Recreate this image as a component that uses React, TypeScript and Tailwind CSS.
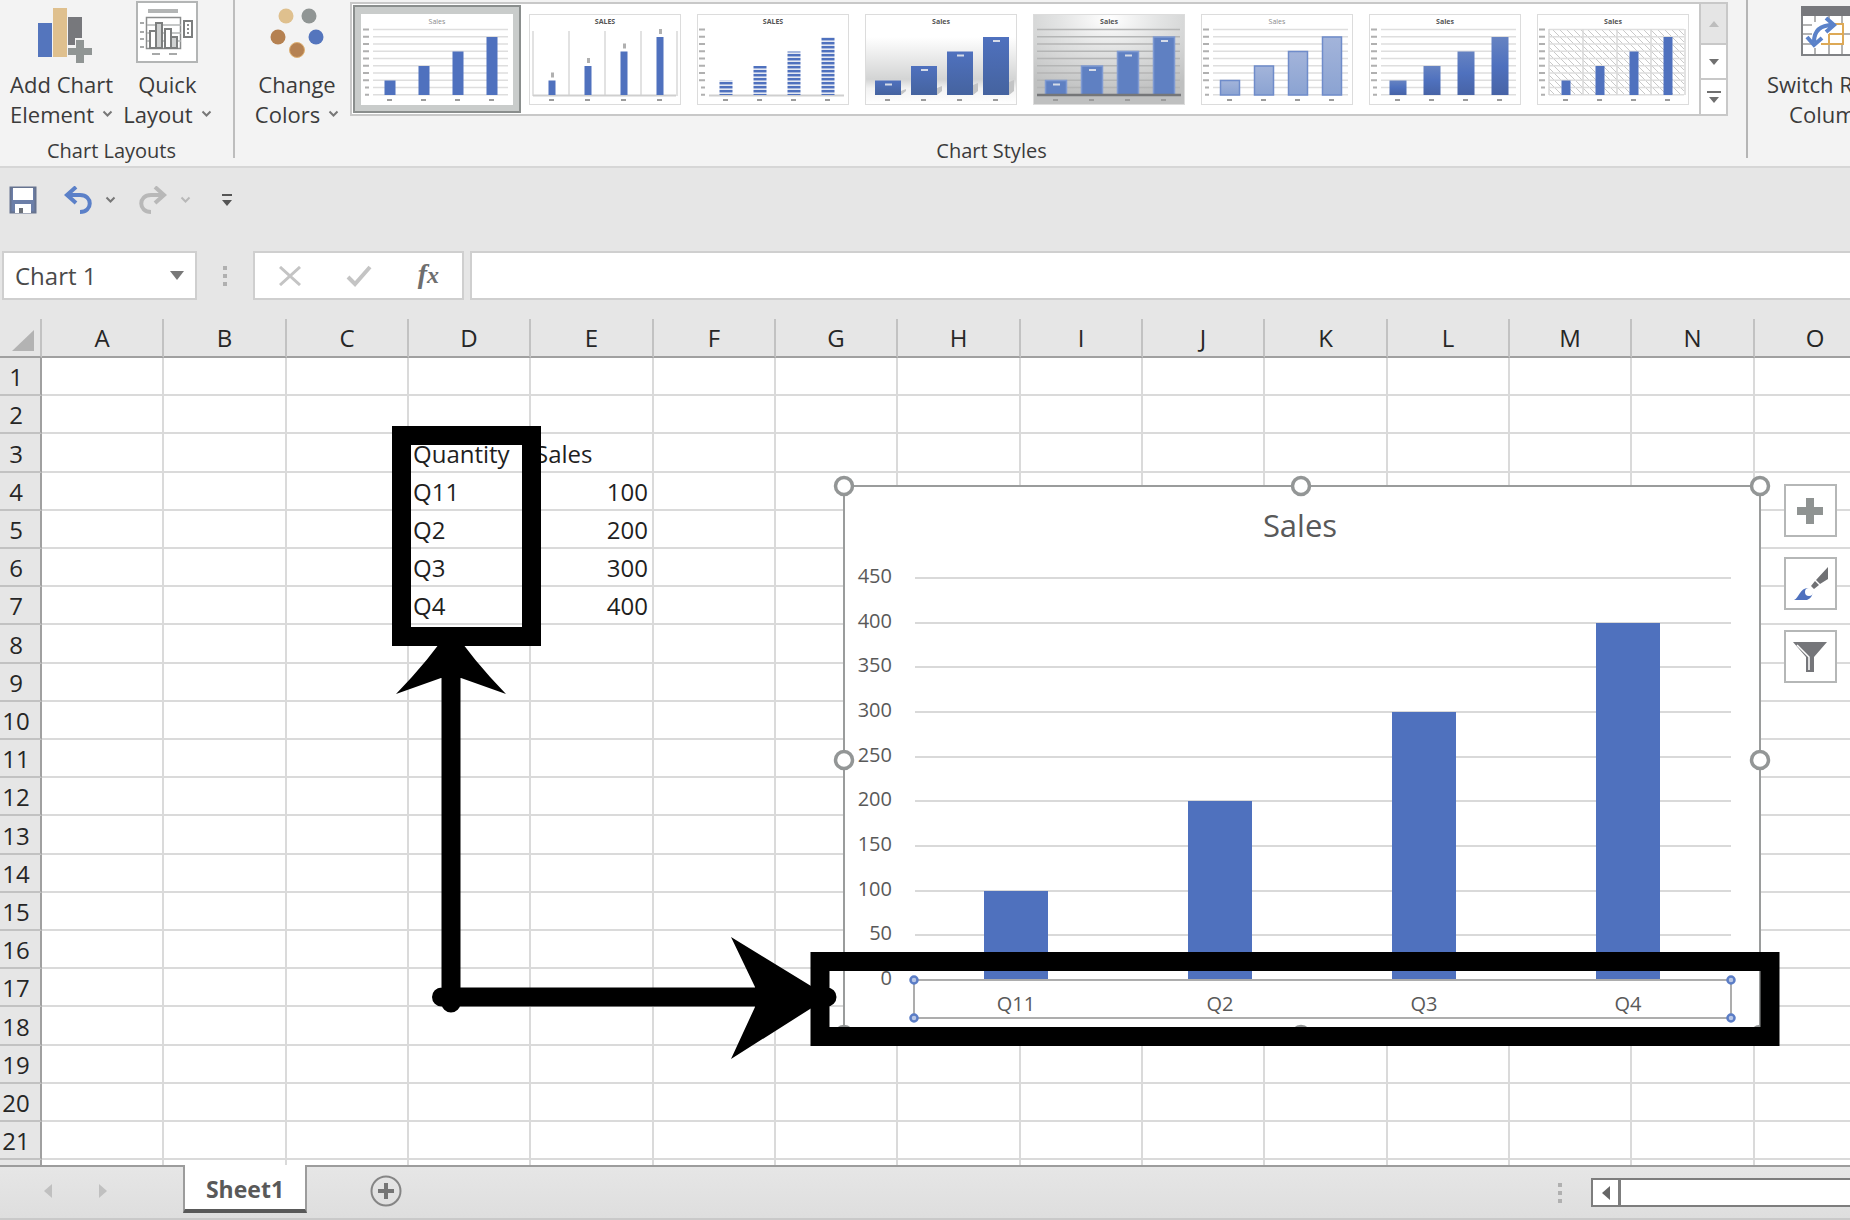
import React from 'react';
import { clsx } from 'clsx';

type ThumbKind = 'plain' | 'columns' | 'striped' | 'shadow' | 'gray' | 'light' | 'gradient' | 'hatch';

interface ThumbStyle {
  kind: ThumbKind;
  title: string;
  barWidth: number;
  bold: boolean;
}

const THUMBS: ThumbStyle[] = [
  { kind: 'plain', title: 'Sales', barWidth: 11, bold: false },
  { kind: 'columns', title: 'SALES', barWidth: 7, bold: true },
  { kind: 'striped', title: 'SALES', barWidth: 13, bold: true },
  { kind: 'shadow', title: 'Sales', barWidth: 26, bold: true },
  { kind: 'gray', title: 'Sales', barWidth: 21, bold: true },
  { kind: 'light', title: 'Sales', barWidth: 19, bold: false },
  { kind: 'gradient', title: 'Sales', barWidth: 17, bold: true },
  { kind: 'hatch', title: 'Sales', barWidth: 9, bold: true },
];

const THUMB_FILL: Record<ThumbKind, string> = {
  plain: '#4f71be',
  columns: '#4f71be',
  striped: 'url(#bar-stripes)',
  shadow: 'url(#bar-dark)',
  gray: '#5f80c2',
  light: 'url(#bar-light)',
  gradient: 'url(#bar-fade)',
  hatch: '#4f71be',
};

const COLUMNS = 'ABCDEFGHIJKLMNO'.split('');
const ROWS = Array.from({ length: 21 }, (_, i) => i + 1);

const CELLS: Record<string, string | number> = {
  D3: 'Quantity',
  E3: 'Sales',
  D4: 'Q11',
  E4: 100,
  D5: 'Q2',
  E5: 200,
  D6: 'Q3',
  E6: 300,
  D7: 'Q4',
  E7: 400,
};

const SERIES = [
  { label: 'Q11', value: 100 },
  { label: 'Q2', value: 200 },
  { label: 'Q3', value: 300 },
  { label: 'Q4', value: 400 },
];

const TICKS = [0, 50, 100, 150, 200, 250, 300, 350, 400, 450];

const Chevron = ({ className = 'text-[#777]' }: { className?: string }) => (
  <svg width="11" height="8" viewBox="0 0 11 8" className={clsx('shrink-0', className)} aria-hidden="true">
    <path d="M1.5 1.5 5.5 5.5 9.5 1.5" fill="none" stroke="currentColor" strokeWidth="2" />
  </svg>
);

const Dots = () => (
  <svg width="4" height="20" viewBox="0 0 4 20" aria-hidden="true">
    <path d="M0 0h4v4H0zM0 8h4v4H0zM0 16h4v4H0z" fill="#b0b0b0" />
  </svg>
);

const ThumbDefs = () => (
  <svg width="0" height="0" className="absolute" aria-hidden="true">
    <defs>
      <pattern id="bar-stripes" width="4" height="4" patternUnits="userSpaceOnUse">
        <rect width="4" height="4" fill="#e4e8f2" />
        <rect width="4" height="2.4" fill="#4f71be" />
      </pattern>
      <pattern id="bg-hatch" width="7" height="7" patternUnits="userSpaceOnUse">
        <path d="M0 0 7 7" stroke="#c9c9c9" strokeWidth="1" />
      </pattern>
      <linearGradient id="bar-dark" x2="0" y2="1">
        <stop offset="0" stopColor="#4f71be" />
        <stop offset="1" stopColor="#45639f" />
      </linearGradient>
      <linearGradient id="bar-light" x2="0" y2="1">
        <stop offset="0" stopColor="#a3b4da" />
        <stop offset="1" stopColor="#8ba3d2" />
      </linearGradient>
      <linearGradient id="bar-fade" x2="0" y2="1">
        <stop offset="0" stopColor="#6683c2" />
        <stop offset="0.5" stopColor="#4f71be" />
        <stop offset="1" stopColor="#4763a6" />
      </linearGradient>
      <linearGradient id="bg-floor" x2="0" y2="1">
        <stop offset="0.25" stopColor="#ffffff" />
        <stop offset="0.72" stopColor="#d3d4d4" />
        <stop offset="0.82" stopColor="#f2f2f2" />
        <stop offset="1" stopColor="#ffffff" />
      </linearGradient>
      <radialGradient id="bg-gray" cx="0.5" cy="0.05" r="0.85">
        <stop offset="0" stopColor="#ffffff" />
        <stop offset="0.4" stopColor="#e2e3e3" />
        <stop offset="1" stopColor="#bfc0c0" />
      </radialGradient>
    </defs>
  </svg>
);

const StyleThumb = ({ kind, title, barWidth, bold }: ThumbStyle) => {
  const wide = kind === 'columns' || kind === 'shadow' || kind === 'gray';
  const grid = kind === 'plain' || kind === 'gray' || kind === 'light' || kind === 'gradient' || kind === 'hatch';
  const ticks = kind !== 'columns' && kind !== 'shadow' && kind !== 'gray';
  const first = wide ? 23 : 29;
  const step = wide ? 36 : 34;
  const left = wide ? 4 : 12;
  const background = kind === 'shadow' ? 'url(#bg-floor)' : kind === 'gray' ? 'url(#bg-gray)' : '#fff';

  return (
    <svg width="152" height="91" viewBox="0 0 152 91" className="block" aria-hidden="true">
      <rect x="0.5" y="0.5" width="151" height="90" fill={background} stroke={kind === 'plain' ? '#fff' : '#dcdcdc'} />
      {kind === 'hatch' && <rect x="12" y="15" width="135" height="66" fill="url(#bg-hatch)" />}
      {grid &&
        Array.from({ length: 10 }, (_, i) => (
          <path key={i} d={`M${left} ${15.5 + i * 7.25}H147`} stroke={kind === 'gray' ? '#b4b5b5' : '#dedede'} strokeWidth="1.5" />
        ))}
      {(kind === 'columns' || kind === 'hatch') &&
        [0, 1, 2, 3, 4].map((i) => (
          <path
            key={i}
            d={kind === 'columns' ? `M${4 + i * 36} 17V82` : `M${12 + i * 34} 15V81`}
            stroke="#d9d9d9"
            strokeWidth="1.5"
          />
        ))}
      {!grid && kind !== 'shadow' && <path d={`M${left} 81.5H147`} stroke="#cfcfcf" strokeWidth="2" />}
      {ticks && Array.from({ length: 10 }, (_, i) => <rect key={i} x={i > 7 ? 4 : 2} y={14.5 + i * 7.25} width={i > 7 ? 4 : 6} height="2" fill="#b0b0b0" />)}
      {[0, 1, 2, 3].map((i) => {
        const center = first + i * step;
        const top = 66.5 - i * 14.5;
        return (
          <g key={i}>
            {kind === 'shadow' && <path d={`M${center + 13} 81V${77 - i * 3}L${center + 18} ${75 - i * 3}V77Z`} fill="#c3c4c5" />}
            <rect
              x={center - barWidth / 2}
              y={top}
              width={barWidth}
              height={81 - top}
              fill={THUMB_FILL[kind]}
              stroke={kind === 'light' ? '#6f8cca' : kind === 'gray' ? '#7f9ad2' : 'none'}
              strokeWidth="1.5"
            />
            {(kind === 'shadow' || kind === 'gray') && <rect x={center - 3} y={top + 3} width="7" height="2" fill="#d5dbe8" />}
            {kind === 'columns' && <rect x={center - 1} y={top - 8} width="3" height="5" fill="#b0b0b0" />}
            <rect x={center - 3} y="85" width="5" height="2" fill="#9c9c9c" />
          </g>
        );
      })}
      {kind === 'gray' && <path d="M4 81H148" stroke="#757678" strokeWidth="2.5" />}
      <text
        x="76"
        y="10"
        textAnchor="middle"
        className={clsx('text-[7px]', bold ? 'fill-[#555] font-bold' : 'fill-[#8a8a8a]')}
      >
        {title}
      </text>
    </svg>
  );
};

const AddElementIcon = () => (
  <svg width="56" height="58" viewBox="0 0 56 58" aria-hidden="true">
    <rect x="1" y="16" width="14" height="34" fill="#5475bd" />
    <rect x="16" y="1" width="14" height="49" fill="#dfc08e" />
    <path d="M31 10h14v21h-7v7h-7z" fill="#77787c" />
    <path d="M39 33h8v8h8v7h-8v8h-8v-8h-8v-7h8z" fill="#909594" />
  </svg>
);

const QuickLayoutIcon = () => (
  <svg width="62" height="62" viewBox="0 0 62 62" aria-hidden="true">
    <rect x="1" y="1" width="60" height="60" fill="#fff" stroke="#b3b5b5" strokeWidth="2" />
    <rect x="12" y="8" width="30" height="4" fill="#b3b5b5" />
    <g fill="none" stroke="#8b8d8d" strokeWidth="1.5">
      <rect x="10.500" y="16.500" width="34" height="31" />
      <path d="M11 24h34M11 32h34M11 40h34" stroke="#b3b5b5" />
      <path d="M4 22h4M4 31h4M4 38h4M4 46h4M16 53h8M33 53h8" />
    </g>
    <g fill="#fff" stroke="#7c7e7e" strokeWidth="2">
      <path d="M14 47V30h6v17zM29 47V28h6v19z" />
      <path d="M20 47V22h6v25zM35 47V36h6v11z" fill="#cfd1d1" />
      <rect x="48" y="20" width="8" height="16" />
    </g>
    <path d="M51 23h2v2h-2zM51 27h2v2h-2zM51 31h2v2h-2z" fill="#8b8d8d" />
  </svg>
);

const ColorsIcon = () => (
  <svg width="56" height="52" viewBox="0 0 56 52" aria-hidden="true">
    <circle cx="17" cy="9" r="7.500" fill="#dfc08e" />
    <circle cx="40" cy="9" r="7.500" fill="#909594" />
    <circle cx="9" cy="30" r="7.500" fill="#b58151" />
    <circle cx="47" cy="30" r="7.500" fill="#5475bd" />
    <circle cx="28" cy="43" r="7.500" fill="#b58151" stroke="#dfb275" />
  </svg>
);

const SwitchIcon = () => (
  <svg width="56" height="50" viewBox="0 0 56 50" aria-hidden="true">
    <rect x="1" y="1" width="54" height="48" fill="#fff" stroke="#808285" strokeWidth="2" />
    <rect x="0" y="0" width="56" height="10" fill="#77787c" />
    <path d="M2 19h9M2 28h9M2 38h9M14 10v6M28 10v3M41 10v8M14 42v6M28 39v9M41 39v9M41 28h14" stroke="#9b9b9b" strokeWidth="1.5" />
    <path d="M28 18h14v20H20M28 28h14M28 28v10" fill="none" stroke="#dda956" strokeWidth="2" />
    <path d="M13 36C13 24 20 19 32 19M25 12l8 7-8 7M6 31l7 8 8-7" fill="none" stroke="#5b82c9" strokeWidth="4" />
  </svg>
);

const RibbonButton = ({
  icon,
  lines,
  chevron = true,
}: {
  icon: React.ReactNode;
  lines: [string, string];
  chevron?: boolean;
}) => (
  <button className="flex shrink-0 flex-col items-center text-[22px] leading-[30px] whitespace-nowrap">
    <span className="flex h-[68px] items-start">{icon}</span>
    <span>{lines[0]}</span>
    <span className="flex items-center gap-2">
      {lines[1]}
      {chevron && <Chevron />}
    </span>
  </button>
);

const Ribbon = () => (
  <header className="flex h-[168px] shrink-0 border-b-2 border-[#d6d6d6] bg-[#f3f3f3] text-[#3b3b3b]">
    <section className="flex h-[158px] w-[235px] shrink-0 flex-col border-r-2 border-[#bdbdbd] pl-[10px]">
      <div className="flex gap-[10px] pt-[1px]">
        <RibbonButton icon={<span className="pt-[6px] pl-[6px]"><AddElementIcon /></span>} lines={['Add Chart', 'Element']} />
        <RibbonButton icon={<QuickLayoutIcon />} lines={['Quick', 'Layout']} />
      </div>
      <h2 className="mt-[8px] pr-[20px] text-center text-[20px] leading-7">Chart Layouts</h2>
    </section>

    <section className="flex h-[158px] shrink-0 flex-col border-r-2 border-[#b5b5b5] pr-[18px] pl-[20px]">
      <div className="flex h-[129px] gap-[11px]">
        <div className="flex w-[84px] justify-center pt-[1px]">
          <RibbonButton icon={<span className="pt-[6px]"><ColorsIcon /></span>} lines={['Change', 'Colors']} />
        </div>
        <div className="mt-[2px] flex h-[114px] border-2 border-[#c8c8c8] bg-white">
          <div className="flex gap-0 pt-[1px] pr-[2px] pl-[1px]">
            {THUMBS.map((thumb, i) => (
              <button
                key={thumb.kind}
                aria-label={`Style ${i + 1}`}
                className={clsx(
                  'h-[108px] w-[168px] shrink-0',
                  i === 0 ? 'border-2 border-[#8a8e8d] bg-[#c9cccb] p-[6px]' : 'p-[8px]',
                )}
              >
                <StyleThumb {...thumb} />
              </button>
            ))}
          </div>
          <div className="flex w-[27px] flex-col border-l-2 border-[#c8c8c8]">
            <button aria-label="Previous styles" className="flex h-[39px] items-center justify-center bg-[#e5e5e5]">
              <svg width="10" height="6" viewBox="0 0 10 6"><path d="M0 6 5 0l5 6z" fill="#bdbdbd" /></svg>
            </button>
            <button aria-label="Next styles" className="flex h-[37px] items-center justify-center border-y-2 border-[#c8c8c8]">
              <svg width="10" height="6" viewBox="0 0 10 6"><path d="M0 0h10L5 6z" fill="#707070" /></svg>
            </button>
            <button aria-label="More styles" className="flex flex-1 items-center justify-center">
              <svg width="14" height="12" viewBox="0 0 14 12"><path d="M0 0h14v2H0zM2 6h10L7 12z" fill="#707070" /></svg>
            </button>
          </div>
        </div>
      </div>
      <h2 className="mt-[8px] text-center text-[20px] leading-7">Chart Styles</h2>
    </section>

    <section className="shrink-0 pt-[1px] pl-[19px]">
      <RibbonButton icon={<span className="pt-[5px]"><SwitchIcon /></span>} lines={['Switch Row/', 'Column']} chevron={false} />
    </section>
  </header>
);

const QuickAccess = () => (
  <div className="flex h-[64px] shrink-0 items-center pl-[9px]">
    <button aria-label="Save">
      <svg width="28" height="28" viewBox="0 0 28 28">
        <rect x="1.500" y="1.500" width="25" height="25" fill="#6c7fa8" stroke="#66738f" strokeWidth="2" />
        <path d="M4 2h20v12H4zM6 18h16v9H6z" fill="#fff" />
        <path d="M10 22h4v5h-4z" fill="#6b7078" />
      </svg>
    </button>
    <div className="ml-[27px] flex items-center gap-[13px]">
      <button aria-label="Undo">
        <svg width="28" height="28" viewBox="0 0 28 28">
          <path d="M12 1 3 9l9 8M3 9h13c13 0 13 17 0 17" fill="none" stroke="#5b80c8" strokeWidth="4" />
        </svg>
      </button>
      <Chevron />
    </div>
    <div className="ml-[23px] flex items-center gap-[13px]">
      <button aria-label="Redo">
        <svg width="28" height="28" viewBox="0 0 28 28">
          <path d="M16 1l9 8-9 8M25 9H12C-1 9-1 26 12 26" fill="none" stroke="#b8b8b8" strokeWidth="4" />
        </svg>
      </button>
      <Chevron className="text-[#b8b8b8]" />
    </div>
    <button aria-label="Customize Quick Access Toolbar" className="ml-[31px]">
      <svg width="10" height="12" viewBox="0 0 10 12"><path d="M0 0h10v2H0zM0 6h10L5 12z" fill="#555" /></svg>
    </button>
  </div>
);

const FormulaBar = () => (
  <div className="mt-[19px] mb-[19px] flex h-[49px] shrink-0 pl-[2px]">
    <div className="flex w-[195px] shrink-0 items-center border-2 border-[#cfcfcf] bg-white pr-[11px] pl-[11px]">
      <input
        aria-label="Name Box"
        defaultValue="Chart 1"
        className="w-full min-w-0 bg-transparent text-[24px] text-[#4a4a4a] outline-none"
      />
      <button aria-label="Named ranges">
        <svg width="14" height="9" viewBox="0 0 14 9"><path d="M0 0h14L7 9z" fill="#787878" /></svg>
      </button>
    </div>
    <div className="flex w-[56px] shrink-0 items-center justify-center">
      <Dots />
    </div>
    <div className="flex w-[211px] shrink-0 items-center justify-between border-2 border-[#cfcfcf] bg-white pr-[23px] pl-[24px]">
      <button aria-label="Cancel">
        <svg width="22" height="20" viewBox="0 0 22 20"><path d="M1 1 21 19M21 1 1 19" stroke="#c4c4c4" strokeWidth="3" /></svg>
      </button>
      <button aria-label="Enter">
        <svg width="26" height="22" viewBox="0 0 26 22"><path d="M2 12l7 7L24 2" fill="none" stroke="#c4c4c4" strokeWidth="4" /></svg>
      </button>
      <button aria-label="Insert Function" className="pb-1 font-['Liberation_Serif',serif] text-[28px] leading-none font-bold text-[#6e6e6e] italic">
        f<span className="text-[24px]">x</span>
      </button>
    </div>
    <input aria-label="Formula Bar" className="ml-[6px] min-w-0 flex-1 border-2 border-r-0 border-[#cfcfcf] bg-white px-3 text-[24px] outline-none" />
  </div>
);

const Grid = () => (
  <table className="w-[1877px] table-fixed border-separate border-spacing-0 text-[24px] leading-none">
    <colgroup>
      <col className="w-[42px]" />
      {COLUMNS.map((col, i) => (
        <col key={col} className={i % 3 === 1 ? 'w-[123px]' : 'w-[122px]'} />
      ))}
    </colgroup>
    <thead>
      <tr className="h-[39px] bg-[#e6e6e6]">
        <th className="border-r-2 border-b-2 border-[#a0a0a0] border-r-[#c2c2c2] p-0">
          <svg width="22" height="21" viewBox="0 0 22 21" className="mt-[6px] ml-[12px]" aria-hidden="true">
            <path d="M0 21H22V0z" fill="#b3b3b3" />
          </svg>
        </th>
        {COLUMNS.map((col) => (
          <th key={col} scope="col" className="border-r-2 border-b-2 border-[#a0a0a0] border-r-[#c2c2c2] p-0 font-normal text-[#262626]">
            {col}
          </th>
        ))}
      </tr>
    </thead>
    <tbody>
      {ROWS.map((row) => (
        <tr key={row} className={row % 5 === 3 ? 'h-[39px]' : 'h-[38px]'}>
          <th scope="row" className="border-r-2 border-b-2 border-[#c2c2c2] border-r-[#a0a0a0] bg-[#e6e6e6] p-0 pt-[2px] pr-[8px] font-normal text-[#262626]">
            {row}
          </th>
          {COLUMNS.map((col) => {
            const value = CELLS[col + row];
            return (
              <td
                key={col}
                className={clsx(
                  'border-r-2 border-b-2 border-[#dadada] bg-white px-[4px] pt-[2px] pb-0 text-[#1f1f1f]',
                  typeof value === 'number' && 'text-right',
                )}
              >
                {value}
              </td>
            );
          })}
        </tr>
      ))}
      {/* sliver of the next row above the tab bar */}
      <tr className="h-[38px]">
        <th className="border-r-2 border-[#a0a0a0] bg-[#e6e6e6] p-0" />
        {COLUMNS.map((col) => (
          <td key={col} className="border-r-2 border-[#dadada] bg-white p-0" />
        ))}
      </tr>
    </tbody>
  </table>
);

const SalesChart = () => {
  const base = 494;
  const y = (value: number) => Math.round(base - (value * 402) / 450);
  return (
    <svg width="916" height="548" viewBox="0 0 916 548" className="overflow-visible" role="img" aria-label="Sales column chart">
      <rect width="916" height="548" fill="#fff" stroke="#9a9c9c" strokeWidth="2" />
      <text x="456" y="51" textAnchor="middle" className="fill-[#595959] text-[31px]">Sales</text>
      {TICKS.map((tick) => (
        <g key={tick}>
          <path d={`M71 ${y(tick)}H887`} stroke="#d9d9d9" strokeWidth="2" />
          <text x="48" y={y(tick) + 5} textAnchor="end" className="fill-[#595959] text-[20px]">{tick}</text>
        </g>
      ))}
      {SERIES.map(({ label, value }, i) => (
        <g key={label}>
          <rect x={140 + i * 204} y={y(value)} width="64" height={base - y(value)} fill="#4f71be" />
          <text x={172 + i * 204} y="525" textAnchor="middle" className="fill-[#595959] text-[20px]">{label}</text>
        </g>
      ))}
      <rect x="70" y="494" width="817" height="38" fill="none" stroke="#adadad" strokeWidth="2" />
      {[[70, 494], [887, 494], [70, 532], [887, 532]].map(([cx, cy]) => (
        <circle key={`${cx}-${cy}`} cx={cx} cy={cy} r="3.500" fill="#b9c7e6" stroke="#5b7dc6" strokeWidth="2.500" />
      ))}
      {[[0, 0], [457, 0], [916, 0], [0, 274], [916, 274], [0, 549], [457, 549], [916, 549]].map(([cx, cy]) => (
        <circle key={`${cx}-${cy}`} cx={cx} cy={cy} r="8.500" fill="#fff" stroke="#939696" strokeWidth="3.500" />
      ))}
    </svg>
  );
};

const ChartButtons = () => (
  <div className="flex flex-col gap-[20px]">
    {[
      {
        label: 'Chart Elements',
        icon: <path d="M13 4h8v9h9v8h-9v9h-8v-9H4v-8h9z" fill="#8f9392" />,
      },
      {
        label: 'Chart Styles',
        icon: (
          <>
            <path d="M35 0v12L27 17 23 13zM22 14l4 4-5 4-3-3z" fill="#707174" />
            <path d="M1 33c5-2 6-12 14-12 6 2 6 9-1 12z" fill="#4f71be" />
            <circle cx="16" cy="25" r="4" fill="#fff" />
          </>
        ),
      },
      {
        label: 'Chart Filters',
        icon: (
          <>
            <path d="M0 2h34L21 17v15h-8V17z" fill="#75767a" />
            <path d="M4 5 16 17v13" fill="none" stroke="#fff" strokeWidth="1.5" />
          </>
        ),
      },
    ].map(({ label, icon }) => (
      <button key={label} aria-label={label} className="flex h-[53px] w-[53px] items-center justify-center border-2 border-[#b5b7b7] bg-white">
        <svg width="35" height="34" viewBox="0 0 35 34">{icon}</svg>
      </button>
    ))}
  </div>
);

// Boxes and arrows that tie the axis labels to the source range
const Callouts = () => (
  <svg width="1850" height="846" viewBox="0 0 1850 846" className="pointer-events-none absolute top-0 left-0" aria-hidden="true">
    <g fill="none" stroke="#000" strokeWidth="19">
      <rect x="401.500" y="116.500" width="130" height="201" />
      <rect x="820" y="642.500" width="950" height="75" />
      <path d="M451 318V684M441.500 678H827" strokeLinecap="round" />
    </g>
    <path d="M396 375 Q430 340 451 308 Q472 340 506 375L461 359H441z" />
    <path d="M731 618 829 678 731 740 755 688V668z" />
  </svg>
);

const SheetTabs = () => (
  <footer className="flex h-[55px] shrink-0 border-t-2 border-b-2 border-t-[#9c9c9c] border-b-[#c9c9c9] bg-linear-to-b from-[#e6e6e6] to-[#dedede]">
    <div className="flex w-[183px] shrink-0 items-center gap-[47px] pb-1 pl-[44px]">
      <button aria-label="Previous sheet">
        <svg width="8" height="14" viewBox="0 0 8 14"><path d="M8 0v14L0 7z" fill="#c0c0c0" /></svg>
      </button>
      <button aria-label="Next sheet">
        <svg width="8" height="14" viewBox="0 0 8 14"><path d="M0 0v14l8-7z" fill="#c0c0c0" /></svg>
      </button>
    </div>
    <button className="-mt-[2px] h-[48px] w-[124px] shrink-0 border-x-2 border-b-4 border-x-[#9c9c9c] border-b-[#595959] bg-white pt-[4px] text-[23px] leading-none font-bold text-[#595959]">
      Sheet1
    </button>
    <button aria-label="New sheet" className="ml-[63px] pb-1">
      <svg width="32" height="32" viewBox="0 0 32 32">
        <circle cx="16" cy="16" r="14.500" fill="none" stroke="#858585" strokeWidth="2" />
        <path d="M16 8v16M8 16h16" stroke="#757575" strokeWidth="4" />
      </svg>
    </button>
    <div className="flex flex-1 items-center justify-end">
      <div className="mr-[29px]">
        <Dots />
      </div>
      <div className="flex h-[29px] w-[259px] border-2 border-r-0 border-[#7d7d7d] bg-white">
        <button aria-label="Scroll left" className="flex w-[28px] items-center justify-center border-r-[3px] border-[#7d7d7d]">
          <svg width="8" height="14" viewBox="0 0 8 14"><path d="M8 0v14L0 7z" fill="#666" /></svg>
        </button>
      </div>
    </div>
  </footer>
);

export default function App() {
  return (
    <div className="flex h-screen w-full flex-col overflow-hidden bg-[#e6e6e6] font-['Open_Sans',sans-serif]">
      <ThumbDefs />
      <Ribbon />
      <QuickAccess />
      <FormulaBar />
      <main className="relative min-h-0 flex-1 overflow-hidden">
        <Grid />
        <div className="absolute top-[167px] left-[844px]">
          <SalesChart />
        </div>
        <div className="absolute top-[165px] left-[1784px]">
          <ChartButtons />
        </div>
        <Callouts />
      </main>
      <SheetTabs />
    </div>
  );
}
